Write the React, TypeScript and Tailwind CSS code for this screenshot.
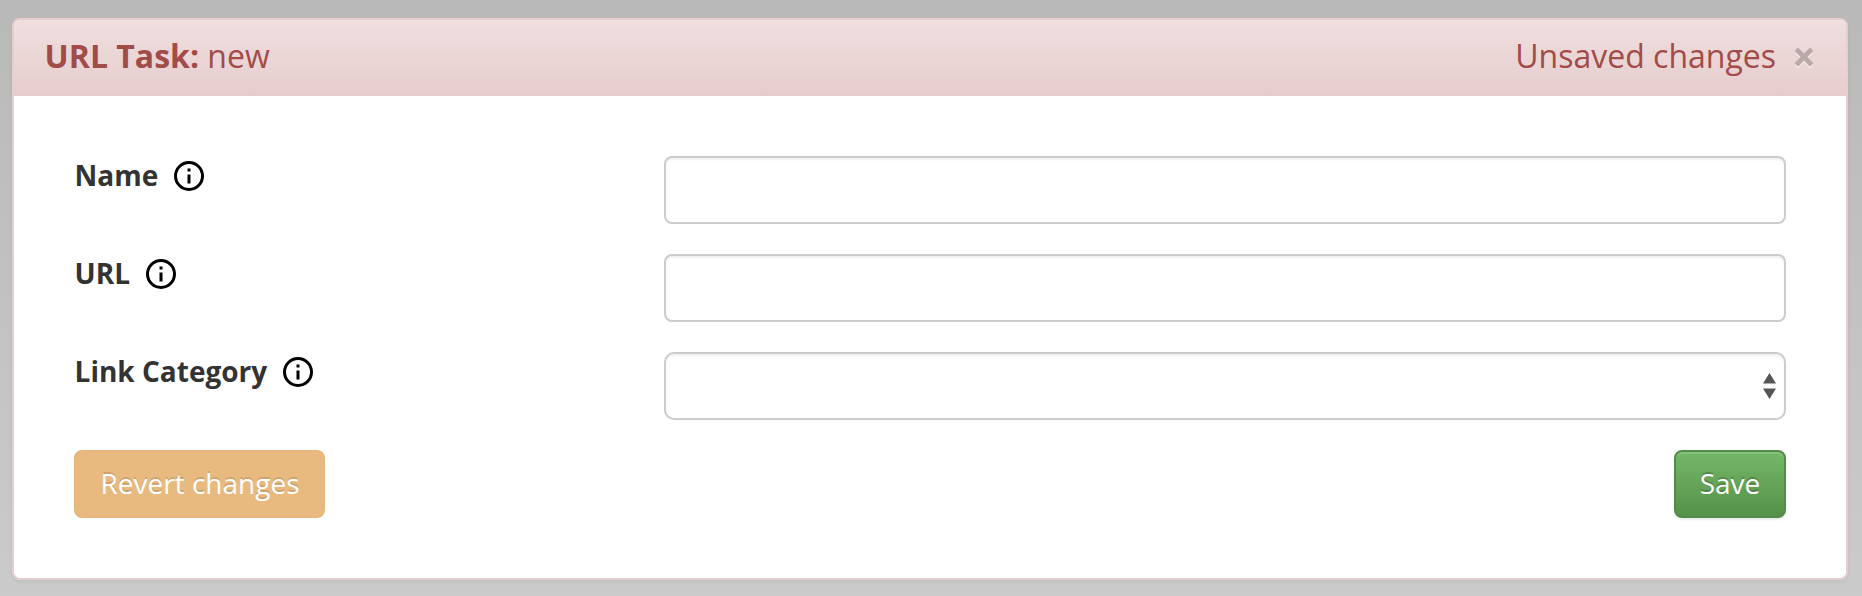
const InfoIcon = () => (
  <svg className="mt-px h-[30px] w-[30px] shrink-0" viewBox="0 0 30 30" aria-hidden="true">
    <circle cx="15" cy="15" r="13.5" fill="none" stroke="#000" strokeWidth="3" />
    <rect x="13.5" y="7.5" width="3" height="3" fill="#000" />
    <rect x="13.5" y="13.5" width="3" height="9" fill="#000" />
  </svg>
);

const controlClass =
  "h-[68px] w-[1122px] rounded-lg border-2 border-[#ccc] bg-white px-6 outline-none shadow-[inset_0_2px_2px_rgba(0,0,0,0.06)]";

const Row = ({ label, id, children }: { label: string; id: string; children: React.ReactNode }) => (
  <div className="flex h-[68px] items-start justify-between">
    <label
      htmlFor={id}
      className="flex h-[39px] items-center gap-4 pl-[0.6px] text-[28px] leading-[38px] font-bold text-[#333]"
    >
      <span className="pb-0.5">{label}</span>
      <InfoIcon />
    </label>
    {children}
  </div>
);

export default function App() {
  return (
    <div className="h-[596px] w-[1862px] bg-linear-to-b from-[#b9b9b9] to-[#cbcbcb] pt-[18px] pl-3 font-['Open_Sans',sans-serif]">
      <section className="flex h-[562px] w-[1836px] flex-col overflow-hidden rounded-lg border-2 border-[#e6cdd0] bg-white shadow-[0_2px_4px_rgba(0,0,0,0.05)]">
        <header className="flex h-[76px] shrink-0 items-center justify-between bg-linear-to-b from-[#f0dfdf] to-[#e6cccd] pr-8 pb-0.5 pl-[30.6px] text-[32px] leading-9 text-[#a14c48]">
          <h1 className="pb-0.5">
            <b className="font-bold">URL Task:</b> new
          </h1>
          <div className="flex items-center gap-[18px]">
            <span className="pb-0.5">Unsaved changes</span>
            <button type="button" aria-label="Close" className="h-5 w-5">
              <svg className="block h-5 w-5 overflow-visible" viewBox="0 0 20 20">
                <path d="M2.3 4.3 17.7 19.7M17.7 4.3 2.3 19.7" stroke="#fff" strokeOpacity=".4" strokeWidth="4.8" />
                <path d="M2.3 2.3 17.7 17.7M17.7 2.3 2.3 17.7" stroke="#bba9a9" strokeWidth="4.8" />
              </svg>
            </button>
          </div>
        </header>
        <form className="flex flex-col gap-[30px] px-[60px] pt-[60px]">
          <Row label="Name" id="name">
            <input id="name" className={controlClass} />
          </Row>
          <Row label="URL" id="url">
            <input id="url" className={controlClass} />
          </Row>
          <Row label="Link Category" id="category">
            <div
              id="category"
              className="flex h-[68px] w-[1122px] items-center justify-end rounded-[10px] border-2 border-[#ccc] bg-white pr-2 shadow-[inset_0_2px_2px_rgba(0,0,0,0.06)]"
            >
              <svg className="h-[26px] w-[13px]" viewBox="0 0 13 26" aria-hidden="true">
                <path d="M0 10.5 6.5 0 13 10.5ZM0 15.5 6.5 26 13 15.5Z" fill="#555" />
              </svg>
            </div>
          </Row>
          <div className="flex justify-between">
            <button
              type="button"
              className="h-[68px] w-[251px] rounded-lg border-2 border-[#e8b77c] bg-[#e8ba80] pb-0.5 pl-px text-[28px] text-white [text-shadow:0_-2px_0_rgba(0,0,0,0.13)]"
            >
              Revert changes
            </button>
            <button
              type="button"
              className="h-[68px] w-28 rounded-lg border-2 border-[#528d47] bg-linear-to-b from-[#75b768] to-[#56924a] pb-0.5 text-[28px] text-white shadow-[inset_0_2px_0_rgba(255,255,255,0.15),0_2px_2px_rgba(0,0,0,0.075)] [text-shadow:0_-2px_0_rgba(0,0,0,0.2)]"
            >
              Save
            </button>
          </div>
        </form>
      </section>
    </div>
  );
}
